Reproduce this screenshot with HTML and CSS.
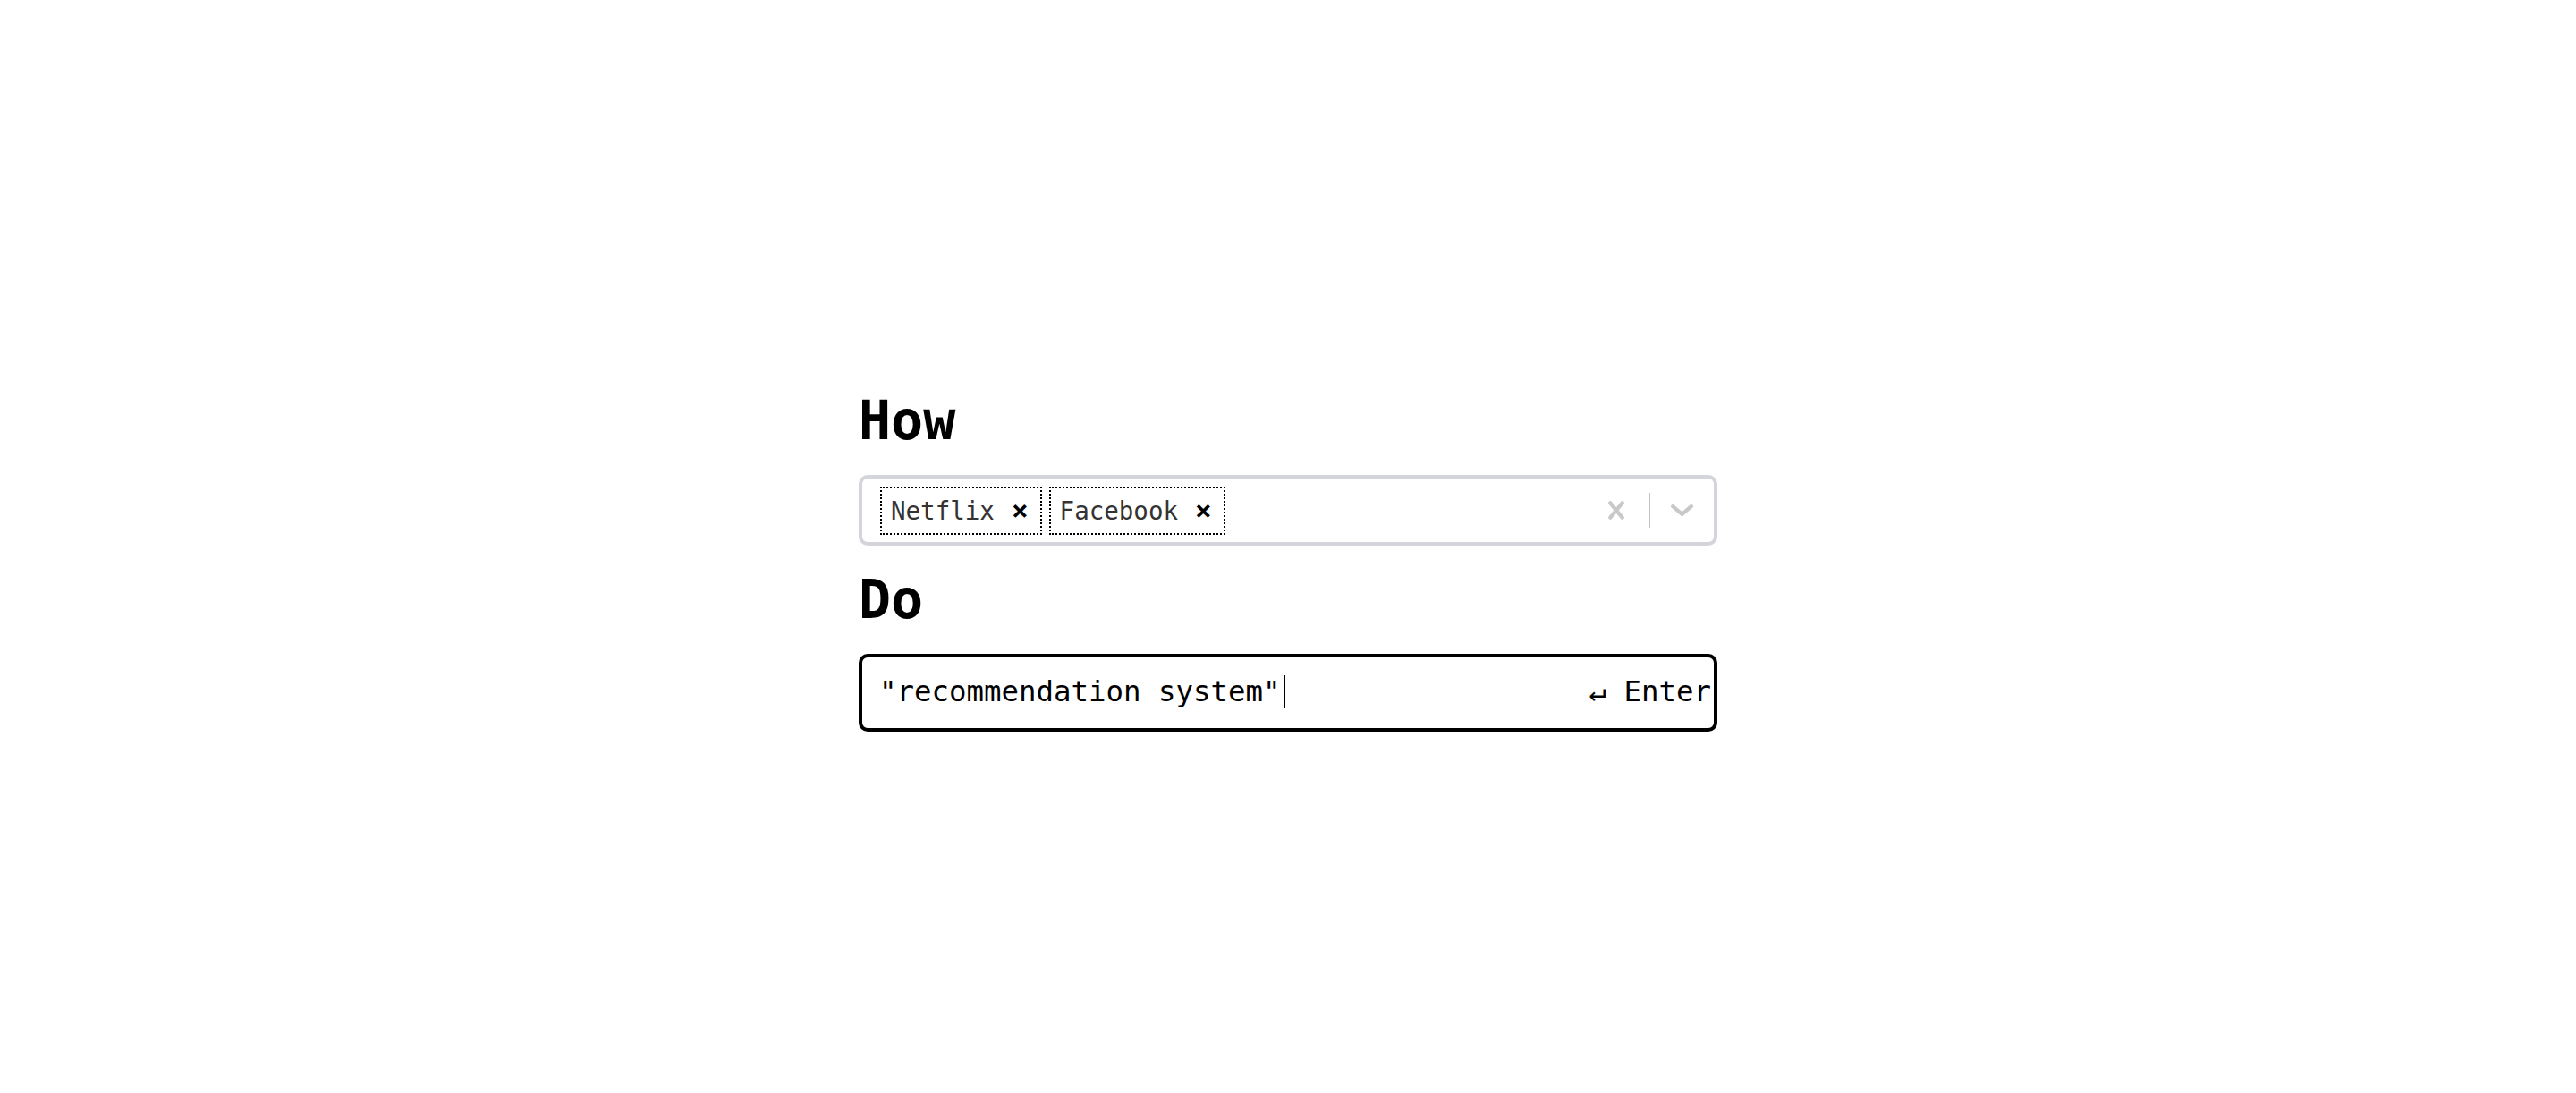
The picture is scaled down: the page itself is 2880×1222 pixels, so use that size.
FILE: index.html
```html
<!DOCTYPE html>
<html lang="en">
<head>
<meta charset="utf-8">
<title>How Do</title>
<link rel="stylesheet" href="styles.css">
</head>
<body>
<main class="wrap">
  <h2 class="title">How</h2>
  <div class="select">
    <div class="chips">
      <div class="chip"><span class="chip-label">Netflix</span><span class="chip-x">×</span></div>
      <div class="chip"><span class="chip-label">Facebook</span><span class="chip-x">×</span></div>
    </div>
    <div class="indicators">
      <svg class="clear-icon" width="18" height="21" viewBox="0 0 18 21"><path d="M2.3 2.3 L15.7 18.7 M15.7 2.3 L2.3 18.7" stroke="#c8c8c8" stroke-width="4.2" stroke-linecap="round" fill="none"/></svg>
      <span class="sep"></span>
      <svg class="chev-icon" width="25" height="13" viewBox="0 0 25 13"><path d="M2.2 2.2 L12.5 10.8 L22.8 2.2" stroke="#c8c8c8" stroke-width="4.2" stroke-linecap="round" stroke-linejoin="round" fill="none"/></svg>
    </div>
  </div>
  <h2 class="title">Do</h2>
  <div class="input">
    <div class="value"><span>"recommendation system"</span><span class="caret"></span></div>
    <div class="hint">↵ Enter</div>
  </div>
</main>
</body>
</html>
```
FILE: styles.css
```css
html, body {
  margin: 0;
  padding: 0;
  background: #ffffff;
}
body {
  font-family: "DejaVu Sans Mono", "Liberation Mono", monospace;
  color: #000;
}
.wrap {
  width: 960px;
  margin: 0 auto;
  padding-top: 435px;
  display: flex;
  flex-direction: column;
}
.title {
  margin: 0 0 26px 0;
  font-size: 60px;
  line-height: 70px;
  font-weight: bold;
  color: #000;
}
.select {
  box-sizing: border-box;
  height: 79px;
  border: 4px solid #d3d5da;
  border-radius: 10px;
  display: flex;
  align-items: center;
  padding-left: 20px;
  margin-bottom: 25px;
}
.chips {
  flex: 1;
  display: flex;
  gap: 8px;
}
.chip {
  box-sizing: border-box;
  height: 54px;
  border: 2px dotted #000;
  display: flex;
  align-items: center;
  padding: 0 13px 0 10px;
  gap: 19px;
  font-size: 27.5px;
  color: #333333;
}
.chip-x {
  font-weight: bold;
  color: #000;
  font-size: 31px;
  line-height: 1;
}
.indicators {
  display: flex;
  align-items: center;
  padding-right: 23px;
}
.clear-icon {
  display: block;
  margin-right: 28px;
}
.sep {
  display: block;
  width: 1px;
  height: 39px;
  background: #c4c4c4;
  margin-right: 23px;
}
.chev-icon {
  display: block;
}
.input {
  box-sizing: border-box;
  height: 87px;
  border: 4px solid #000;
  border-radius: 10px;
  display: flex;
  align-items: center;
  justify-content: space-between;
  padding: 0 3px 3px 19px;
  font-size: 32.4px;
}
.value {
  display: flex;
  align-items: center;
  white-space: pre;
}
.caret {
  display: inline-block;
  width: 2px;
  height: 37px;
  background: #000;
  margin-left: 3px;
}
.hint {
  white-space: pre;
}
```
